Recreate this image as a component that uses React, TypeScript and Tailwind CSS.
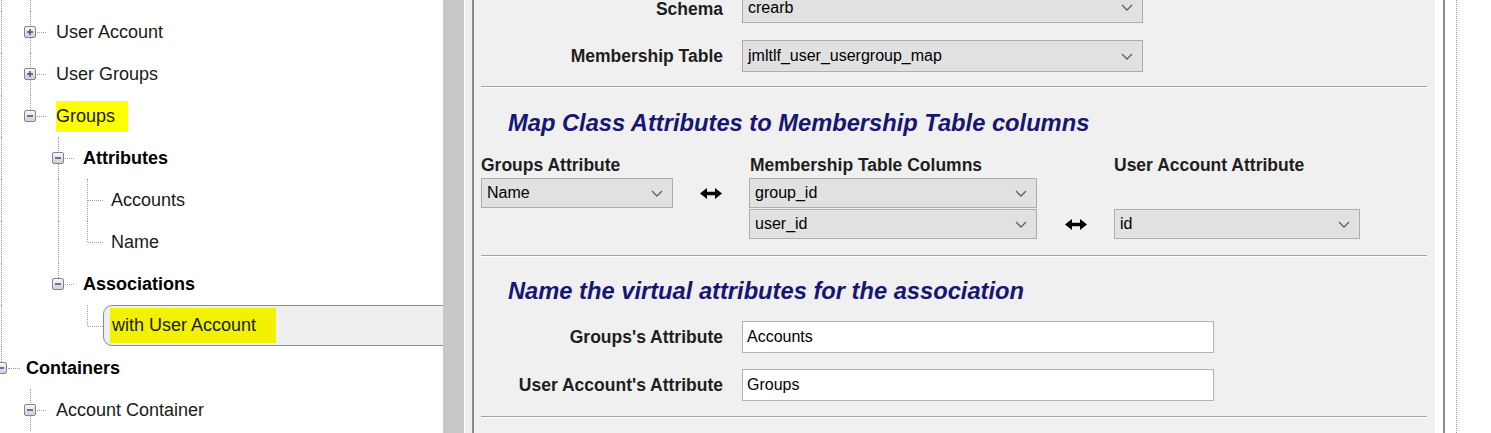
import React from "react";

type Level = 0 | 1 | 2 | 3;

type TreeNode = {
  label: string;
  level: Level;
  box?: "plus" | "minus";
  bold?: boolean;
  mark?: boolean;
  selected?: boolean;
  guides: string[];
};

// vertical guide lines are listed per row (class strings: left offset + height)
const TREE: TreeNode[] = [
  { label: "User Account", level: 1, box: "plus", guides: ["left-[1px] h-full", "left-[30px] h-full"] },
  { label: "User Groups", level: 1, box: "plus", guides: ["left-[1px] h-full", "left-[30px] h-full"] },
  { label: "Groups", level: 1, box: "minus", mark: true, guides: ["left-[1px] h-full", "left-[30px] h-[21px]"] },
  { label: "Attributes", level: 2, box: "minus", bold: true, guides: ["left-[1px] h-full", "left-[58px] h-full"] },
  { label: "Accounts", level: 3, guides: ["left-[1px] h-full", "left-[58px] h-full", "left-[87px] h-full"] },
  { label: "Name", level: 3, guides: ["left-[1px] h-full", "left-[58px] h-full", "left-[87px] h-[21px]"] },
  { label: "Associations", level: 2, box: "minus", bold: true, guides: ["left-[1px] h-full", "left-[58px] h-[21px]"] },
  { label: "with User Account", level: 3, mark: true, selected: true, guides: ["left-[1px] h-full", "left-[87px] h-[21px]"] },
  { label: "Containers", level: 0, box: "minus", bold: true, guides: ["left-[1px] h-[21px]"] },
  { label: "Account Container", level: 1, box: "minus", guides: ["left-[30px] h-full"] },
];

const BOX_POS: Record<Level, string> = {
  0: "left-[-5px]",
  1: "left-[24px]",
  2: "left-[52px]",
  3: "left-[81px]",
};

const STUB_POS: Record<Level, string> = {
  0: "left-[8px] w-[12px]",
  1: "left-[37px] w-[9px]",
  2: "left-[65px] w-[9px]",
  3: "left-[88px] w-[15px]",
};

const TEXT_POS: Record<Level, string> = {
  0: "ml-[26px]",
  1: "ml-[56px]",
  2: "ml-[83px]",
  3: "ml-[111px]",
};

const Expander = ({ kind, pos }: { kind: "plus" | "minus"; pos: string }) => (
  <span
    className={`absolute top-[15px] flex h-[12px] w-[12px] items-center justify-center rounded-[2px] border border-[#858585] bg-linear-to-b from-[#f8f8f8] to-[#cfcfcf] ${pos}`}
  >
    <svg width="8" height="8" viewBox="0 0 8 8">
      <path d="M1 4h6" stroke="#3a5a9c" strokeWidth="1.6" />
      {kind === "plus" && <path d="M4 1v6" stroke="#3a5a9c" strokeWidth="1.6" />}
    </svg>
  </span>
);

const Tree = () => (
  <div className="w-[443px] shrink-0 overflow-hidden bg-white text-[18px] text-[#1a1a1a]">
    <div className="relative h-[11px]">
      <span className="absolute top-0 left-[1px] h-full border-l border-dotted border-[#9c9c9c]" />
      <span className="absolute top-0 left-[30px] h-full border-l border-dotted border-[#9c9c9c]" />
    </div>
    {TREE.map((n, i) => (
      <div key={i} className="relative flex h-[42px] items-center whitespace-nowrap">
        {n.guides.map((g, j) => (
          <span key={j} className={`absolute top-0 border-l border-dotted border-[#9c9c9c] ${g}`} />
        ))}
        <span className={`absolute top-[21px] h-0 border-t border-dotted border-[#9c9c9c] ${STUB_POS[n.level]}`} />
        {n.box && <Expander kind={n.box} pos={BOX_POS[n.level]} />}
        {n.selected ? (
          <div className="ml-[103px] flex h-[41px] w-[420px] shrink-0 items-center self-start rounded-l-[9px] border border-[#8c8c8c] bg-[#efefef] pl-[6px]">
            <span className="bg-[#f2f200] py-[4px] pr-[20px] pl-[2px]">{n.label}</span>
          </div>
        ) : (
          <span
            className={`${TEXT_POS[n.level]} ${n.bold ? "font-bold text-black" : ""} ${
              n.mark ? "bg-[#ffff00] py-[2px] pr-[13px]" : ""
            }`}
          >
            {n.label}
          </span>
        )}
      </div>
    ))}
  </div>
);

const Chevron = () => (
  <svg width="12" height="7" viewBox="0 0 12 7" className="shrink-0">
    <path d="M1 1l5 5 5-5" fill="none" stroke="#5f5f5f" strokeWidth="1.3" />
  </svg>
);

const Select = ({ value, className, textClass = "" }: { value: string; className: string; textClass?: string }) => (
  <div
    className={`flex items-center justify-between border border-[#adadad] bg-[#e1e1e1] pr-[9px] pl-[5px] text-[16px] text-black ${className}`}
  >
    <span className={textClass}>{value}</span>
    <Chevron />
  </div>
);

const Arrow = () => (
  <svg width="22" height="11" viewBox="0 0 22 11">
    <path d="M0 5.5L7 0v3.8h8V0l7 5.5-7 5.5V7.2H7V11z" fill="#000" />
  </svg>
);

const Separator = ({ className }: { className: string }) => (
  <div className={`h-[2px] border-t border-[#a3a3a3] border-b border-b-white ${className}`} />
);

const Heading = ({ children, className }: { children: React.ReactNode; className: string }) => (
  <p className={`ml-[27px] text-[23.7px] leading-[28px] font-bold text-[#161673] italic ${className}`}>{children}</p>
);

const Label = ({ children, className = "" }: { children: React.ReactNode; className?: string }) => (
  <span className={`text-[17.5px] font-bold text-[#1e1e1e] ${className}`}>{children}</span>
);

const FormRow = ({
  label,
  children,
  className,
  labelClass = "leading-[20px]",
}: {
  label: string;
  children: React.ReactNode;
  className: string;
  labelClass?: string;
}) => (
  <div className={`flex items-center ${className}`}>
    <Label className={`w-[242px] text-right ${labelClass}`}>{label}</Label>
    <div className="ml-[19px]">{children}</div>
  </div>
);

const Panel = () => (
  <main className="w-[961px] shrink-0 bg-[#f0f0f0] pr-[8px] pl-[7px]">
    {/* scrolled view: the schema row sits partly above the top edge */}
    <FormRow label="Schema" className="mt-[-9px]" labelClass="mt-[4px] leading-[14px]">
      <Select value="crearb" className="h-[32px] w-[401px]" textClass="mt-[2px] leading-[14px]" />
    </FormRow>
    <FormRow label="Membership Table" className="mt-[17px]">
      <Select value="jmltlf_user_usergroup_map" className="h-[32px] w-[401px]" />
    </FormRow>
    <Separator className="mt-[14px]" />

    <Heading className="mt-[21px]">Map Class Attributes to Membership Table columns</Heading>
    <div className="mt-[18px] grid grid-cols-[192px_76px_288px_77px_246px] gap-y-[1px]">
      <Label className="leading-[20px]">Groups Attribute</Label>
      <span />
      <Label className="ml-[1px] leading-[20px]">Membership Table Columns</Label>
      <span />
      <Label className="leading-[20px]">User Account Attribute</Label>

      <Select value="Name" className="mt-[2px] h-[30px]" />
      <div className="mt-[2px] flex items-center justify-center">
        <Arrow />
      </div>
      <Select value="group_id" className="mt-[2px] h-[30px]" />
      <span />
      <span />

      <span />
      <span />
      <Select value="user_id" className="h-[30px]" />
      <div className="flex items-center justify-center">
        <Arrow />
      </div>
      <Select value="id" className="h-[30px]" />
    </div>
    <Separator className="mt-[16px]" />

    <Heading className="mt-[20px]">Name the virtual attributes for the association</Heading>
    <FormRow label="Groups's Attribute" className="mt-[16px]">
      <div className="flex h-[32px] w-[472px] items-center border border-[#b4b4b4] bg-white pl-[4px] text-[16px] text-black">
        Accounts
      </div>
    </FormRow>
    <FormRow label="User Account's Attribute" className="mt-[16px]">
      <div className="flex h-[32px] w-[472px] items-center border border-[#b4b4b4] bg-white pl-[4px] text-[16px] text-black">
        Groups
      </div>
    </FormRow>
    <Separator className="mt-[15px]" />
  </main>
);

export default function App() {
  return (
    <div className="flex h-[433px] w-[1491px] overflow-hidden bg-white font-['Liberation_Sans',Arial,sans-serif]">
      <Tree />
      <div className="w-[21px] shrink-0 bg-[#c8c8c8]" />
      <div className="w-[8px] shrink-0 border-l border-white bg-[#f0f0f0]" />
      <div className="w-[2px] shrink-0 bg-[#8a8a8a]" />
      <Panel />
      <div className="w-[8px] shrink-0 bg-white" />
      <div className="w-[2px] shrink-0 bg-[#8a8a8a]" />
      <div className="flex-1 bg-white pl-[11px]">
        <div className="h-full border-l border-dotted border-[#9a9a9a]" />
      </div>
    </div>
  );
}
